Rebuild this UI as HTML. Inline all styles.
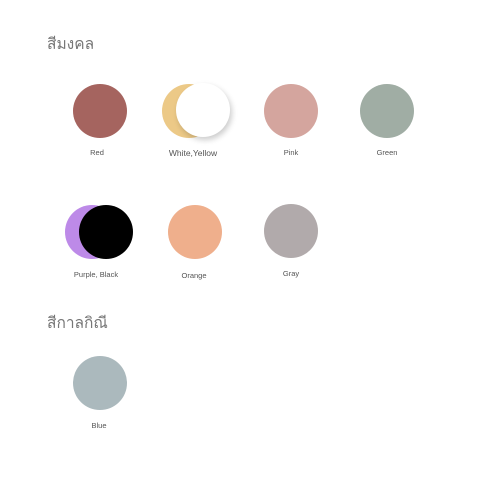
<html><head><style>
body{margin:0;width:478px;height:479px;background:#fff;font-family:"Liberation Sans","Noto Sans CJK SC",sans-serif;position:relative;overflow:hidden}
.h{position:absolute;left:47px;font-size:15.5px;color:#777;font-family:"Noto Sans CJK SC","WenQuanYi Zen Hei",sans-serif}
.c{position:absolute;width:54px;height:54px;border-radius:50%}
.l{position:absolute;font-size:7.5px;color:#555;width:100px;text-align:center}
</style></head><body>
<div class="h" style="top:31px">สีมงคล</div>
<div class="c" style="left:73px;top:84px;background:#a5645f"></div>
<div class="l" style="left:47px;top:148px">Red</div>
<div class="c" style="left:162px;top:84px;background:#ecc987"></div>
<div class="c" style="left:176px;top:83px;background:#fff;box-shadow:2px 3px 6px rgba(0,0,0,.2)"></div>
<div class="l" style="left:143px;top:148px;font-size:8.5px">White,Yellow</div>
<div class="c" style="left:264px;top:84px;background:#d4a59e"></div>
<div class="l" style="left:241px;top:148px">Pink</div>
<div class="c" style="left:360px;top:84px;background:#a0ada4"></div>
<div class="l" style="left:337px;top:148px">Green</div>
<div class="c" style="left:65px;top:205px;background:#bd8ae8"></div>
<div class="c" style="left:79px;top:205px;background:#000"></div>
<div class="l" style="left:46px;top:270px">Purple, Black</div>
<div class="c" style="left:168px;top:205px;background:#efaf8c"></div>
<div class="l" style="left:144px;top:271px">Orange</div>
<div class="c" style="left:264px;top:204px;background:#b1aaab"></div>
<div class="l" style="left:241px;top:269px">Gray</div>
<div class="h" style="top:310px">สีกาลกิณี</div>
<div class="c" style="left:73px;top:356px;background:#abb9bd"></div>
<div class="l" style="left:49px;top:421px">Blue</div>
</body></html>
